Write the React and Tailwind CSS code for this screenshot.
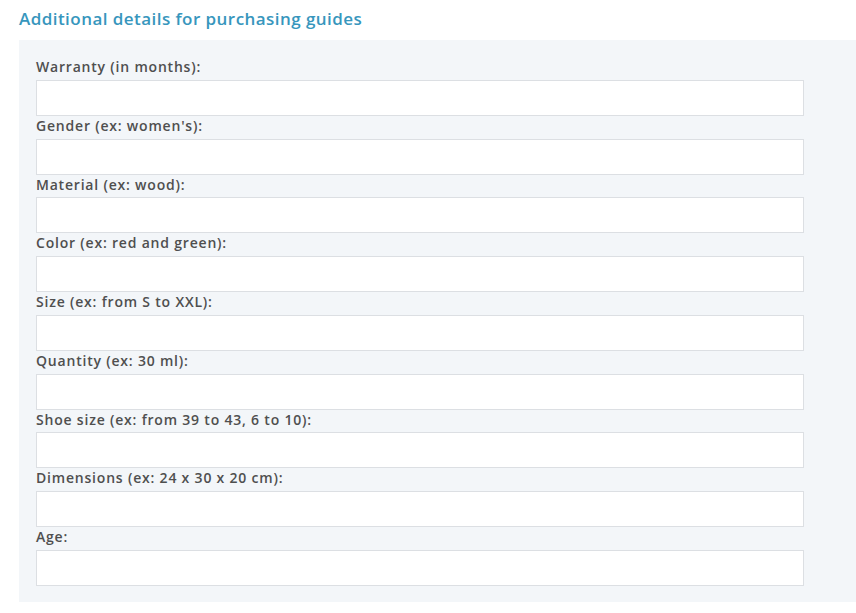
export default function App() {
  const fields = [
    "Warranty (in months):",
    "Gender (ex: women's):",
    "Material (ex: wood):",
    "Color (ex: red and green):",
    "Size (ex: from S to XXL):",
    "Quantity (ex: 30 ml):",
    "Shoe size (ex: from 39 to 43, 6 to 10):",
    "Dimensions (ex: 24 x 30 x 20 cm):",
    "Age:",
  ];
  return (
    <div className="w-[856px] h-[613px] bg-white overflow-hidden" style={{ fontFamily: '"Open Sans", "Noto Sans", sans-serif' }}>
      <div className="pl-[19px] pt-[7px]">
        <h2 className="text-[17px] leading-[24px] font-semibold tracking-[0.45px] text-[#3796bd] h-[33px]">
          Additional details for purchasing guides
        </h2>
        <div className="bg-[#f3f6f9] pl-[17px] pr-[52px] pt-[17px] pb-[16px]">
          {fields.map((f) => (
            <div key={f}>
              <div className="h-[22.75px] leading-[20px] text-[14px] font-semibold tracking-[0.8px] text-[#4f4f4f]">{f}</div>
              <div className="h-[36px] w-[768px] bg-white border border-[#dcdfe3]" />
            </div>
          ))}
        </div>
      </div>
    </div>
  );
}
